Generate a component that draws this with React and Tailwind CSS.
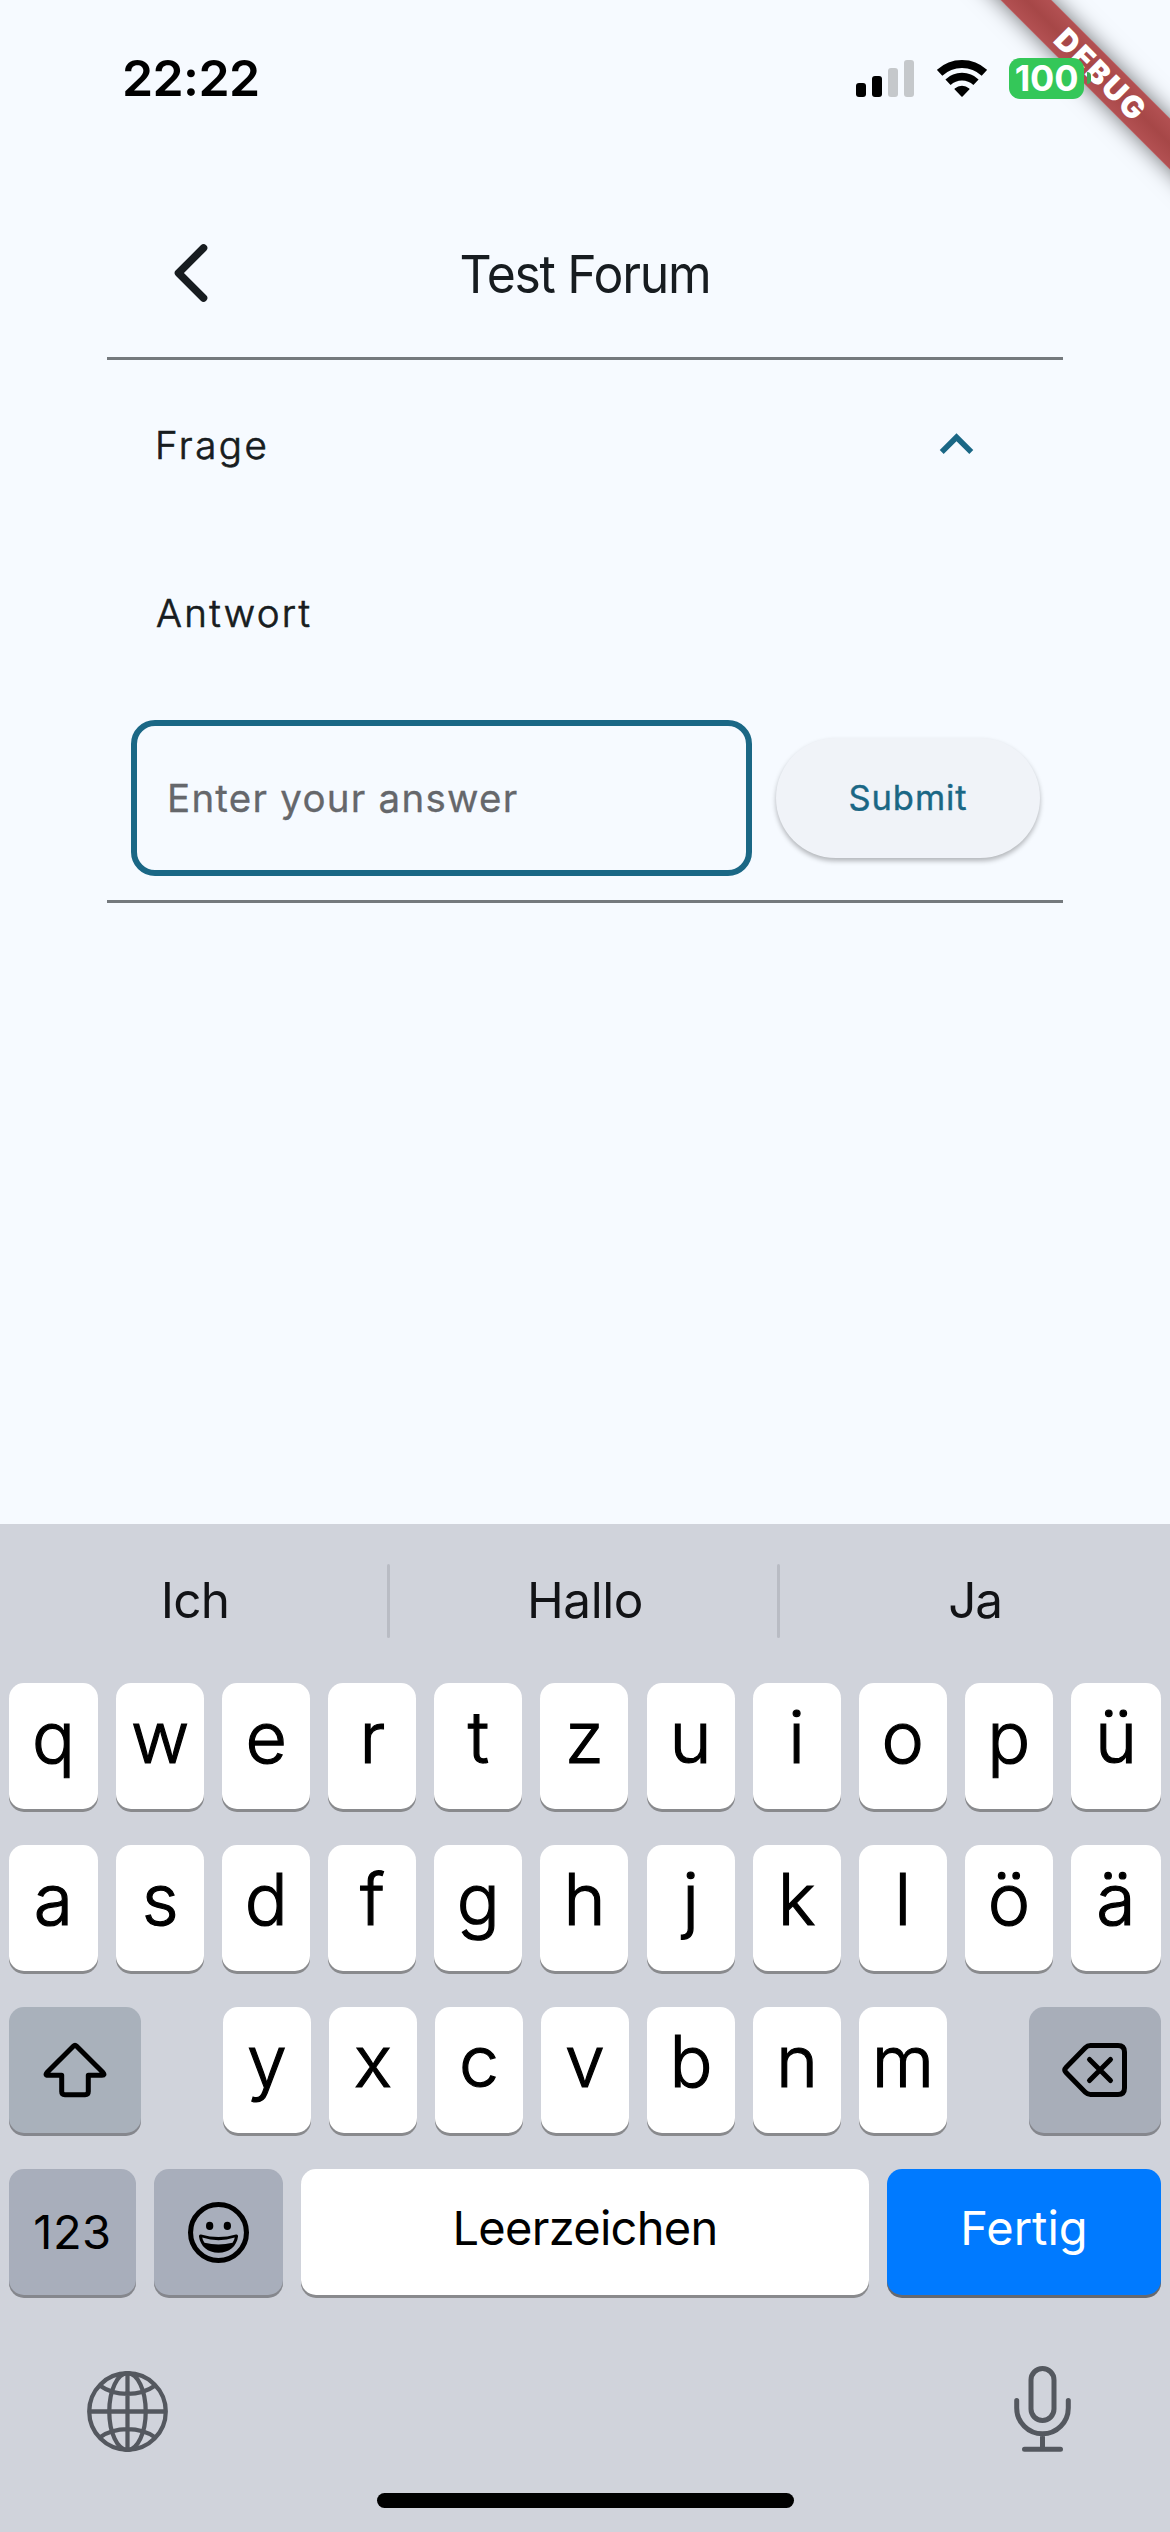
function SignalBars() {
  return (
    <div className="flex h-[37px] items-end gap-[6px]">
      <div className="h-[14px] w-[10px] rounded-[3px] bg-black" />
      <div className="h-[21px] w-[10px] rounded-[3px] bg-black" />
      <div className="h-[29px] w-[10px] rounded-[3px] bg-[#c5c8cb]" />
      <div className="h-[37px] w-[10px] rounded-[3px] bg-[#c5c8cb]" />
    </div>
  );
}

function WifiIcon() {
  return (
    <svg className="h-[37px] w-[50px]" viewBox="0 0 50 37" fill="none" stroke="#000">
      <path d="M2.6 12.9A32.9 32.9 0 0 1 47.4 12.9" strokeWidth="8" />
      <path d="M11 22.2A20.4 20.4 0 0 1 39 22.2" strokeWidth="7.6" />
      <path d="M25 36L18.3 29A10.4 10.4 0 0 1 31.7 29Z" fill="#000" strokeWidth="1.6" strokeLinejoin="round" />
    </svg>
  );
}

function DebugBanner() {
  return (
    <div className="absolute top-0 right-0 h-[240px] w-[240px] overflow-hidden">
      <div className="absolute top-[54px] left-[-32px] flex h-[36px] w-[400px] rotate-45 items-center justify-center bg-[linear-gradient(#b35153,#a64747_50%,#b35153)] pl-[8px] text-[30.5px] leading-[36px] font-black tracking-[2px] text-white shadow-[0_0_22px_rgba(0,0,0,0.55)]">
        DEBUG
      </div>
    </div>
  );
}

function StatusBar() {
  return (
    <div className="flex h-[156px] items-center justify-between pr-[79px] pl-[122px]">
      <span className="text-[50px] font-semibold tracking-[-0.6px] text-black">22:22</span>
      <div className="relative flex items-center">
        <SignalBars />
        <div className="w-[23px]" />
        <WifiIcon />
        <div className="w-[22px]" />
        <div className="flex h-[41px] w-[75px] items-center justify-center rounded-[11px] bg-[#34c759] text-[36px] font-bold tracking-[-0.2px] text-white">
          100
        </div>
        <div className="ml-[3px] h-[12px] w-[4px] rounded-r-[4px] bg-[#3fa656]" />
      </div>
    </div>
  );
}

function Forum() {
  return (
    <div className="mx-[107px] h-[1368px]">
      <div className="grid h-[204px] grid-cols-[120px_1fr_120px] items-center border-b-[3px] border-[#74797d] pt-[33px]">
        <svg className="ml-[64px] h-[60px] w-[40px]" viewBox="0 0 40 60" fill="none" stroke="#171c20" strokeWidth="7.600" strokeLinecap="round" strokeLinejoin="round">
          <path d="M32.500 5L7.500 30L32.500 55" />
        </svg>
        <h1 className="scale-x-95 pt-[2px] text-center text-[52.5px] leading-[60px] font-normal tracking-[-1.33px] text-[#171c20]">
          Test Forum
        </h1>
      </div>
      <div className="flex h-[171px] items-center justify-between pr-[73px] pl-[48px]">
        <span className="text-[38.5px] font-light tracking-[2.5px] text-[#171c20] [-webkit-text-stroke:0.7px_#171c20]">Frage</span>
        <svg className="mt-[-2px] h-[67px] w-[67px]" viewBox="0 0 24 24" fill="#1a6785">
          <path d="M12 8l-6 6 1.41 1.41L12 10.83l4.59 4.58L18 14z" />
        </svg>
      </div>
      <div className="flex h-[165px] items-center pl-[49px]">
        <span className="text-[38.5px] font-light tracking-[2.3px] text-[#171c20] [-webkit-text-stroke:0.7px_#171c20]">Antwort</span>
      </div>
      <div className="flex items-center gap-[24px] border-b-[3px] border-[#74797d] py-[24px] pl-[24px]">
        <div className="flex h-[156px] w-[621px] items-center rounded-[24px] border-[6px] border-[#1a6785] pt-[2px] pl-[30px]">
          <span className="text-[38.5px] tracking-[1.24px] text-[#65676b] [-webkit-text-stroke:0.3px_#65676b]">Enter your answer</span>
        </div>
        <button className="h-[120px] w-[264px] rounded-full bg-[#f0f3f8] text-[34.5px] font-normal tracking-[0.9px] text-[#1a6785] shadow-[0_3px_5px_rgba(0,0,0,0.28)] [-webkit-text-stroke:0.4px_#1a6785]">
          Submit
        </button>
      </div>
    </div>
  );
}

function Suggestions() {
  return (
    <div className="flex h-[153px] items-center text-[49.5px] font-normal text-[#121316]">
      <span className="w-[390px] text-center tracking-[-0.8px]">Ich</span>
      <div className="-ml-[3px] h-[74px] w-[3px] rounded-full bg-[#b9bcc4]" />
      <span className="w-[390px] text-center tracking-[-0.44px]">Hallo</span>
      <div className="-ml-[3px] h-[74px] w-[3px] rounded-full bg-[#b9bcc4]" />
      <span className="w-[390px] text-center tracking-[-1.2px]">Ja</span>
    </div>
  );
}

function LetterKey({ children }) {
  return (
    <div className="flex h-[126px] items-center justify-center rounded-[15px] bg-white pb-[16px] text-[71.5px] font-light text-black shadow-[0_3px_0_#898a8d] [-webkit-text-stroke:1.2px_#000]">
      {children}
    </div>
  );
}

function LetterRow({ letters }) {
  return (
    <div className="grid grid-cols-[89px_repeat(9,88px)_90px] justify-between">
      {letters.map((l) => (
        <LetterKey key={l}>{l}</LetterKey>
      ))}
    </div>
  );
}

function ShiftIcon() {
  return (
    <svg className="h-[56px] w-[64px]" viewBox="0 0 64 56" fill="none" stroke="#000" strokeWidth="5" strokeLinejoin="round">
      <path d="M30.300 4.200Q32 2.500 33.700 4.200L60 30.500Q62.300 33.300 59 33.300H45.300V49.500Q45.300 52.700 42.100 52.700H21.900Q18.700 52.700 18.700 49.500V33.300H5Q1.700 33.300 4 30.500Z" />
    </svg>
  );
}

function DeleteIcon() {
  return (
    <svg className="h-[54px] w-[66px]" viewBox="0 0 66 54" fill="none" stroke="#000" strokeWidth="5" strokeLinecap="round" strokeLinejoin="round">
      <path d="M28.500 2.500H56Q62.500 2.500 62.500 9V45Q62.500 51.500 56 51.500H28.500Q25.500 51.500 23.300 49.300L4 29.500Q1.600 27 4 24.500L23.300 4.700Q25.500 2.500 28.500 2.500Z" />
      <path d="M27.500 16.500L48.500 37.500M48.500 16.500L27.500 37.500" />
    </svg>
  );
}

function SmileyIcon() {
  return (
    <svg className="h-[61px] w-[61px]" viewBox="0 0 60 60">
      <circle cx="30" cy="30" r="27.500" fill="none" stroke="#000" strokeWidth="5" />
      <ellipse cx="21.300" cy="23.500" rx="3.600" ry="4" />
      <ellipse cx="38.700" cy="23.500" rx="3.600" ry="4" />
      <path d="M12.800 32Q30 37 47.200 32Q49.400 31.600 49.200 34C48 43.500 40.500 50 30 50S12 43.500 10.800 34Q10.600 31.600 12.800 32Z" />
      <path d="M14 35Q30 40 46 35Q45.500 38 43.800 40.200Q30 43.600 16.200 40.200Q14.500 38 14 35Z" fill="#a8aebb" />
    </svg>
  );
}

function GlobeIcon() {
  return (
    <svg className="h-[81px] w-[81px]" viewBox="0 0 80 80" fill="none" stroke="#54585f" strokeWidth="4.200">
      <circle cx="40" cy="40" r="37.800" />
      <ellipse cx="40" cy="40" rx="18" ry="38" />
      <path d="M40 2V78M2 40H78M13 14.500Q24 22.500 40 22.500T67 14.500M13 65.500Q24 57.500 40 57.500T67 65.500" />
    </svg>
  );
}

function MicIcon() {
  return (
    <svg className="h-[86px] w-[57px]" viewBox="0 0 57 86" fill="none" stroke="#54585f" strokeWidth="5" strokeLinecap="round">
      <rect x="17" y="2.500" width="23" height="52" rx="11.500" />
      <path d="M2.700 34.500V42A25.800 25.800 0 0 0 54.300 42V34.500M28.500 68.500V83M10.500 83.200H46.500" />
    </svg>
  );
}

function Keyboard() {
  return (
    <div className="h-[1008px] bg-[#d0d3db]">
      <Suggestions />
      <div className="flex flex-col gap-[36px] px-[9px] pt-[6px]">
        <LetterRow letters={["q", "w", "e", "r", "t", "z", "u", "i", "o", "p", "ü"]} />
        <LetterRow letters={["a", "s", "d", "f", "g", "h", "j", "k", "l", "ö", "ä"]} />
        <div className="flex justify-between">
          <div className="flex h-[126px] w-[132px] items-center justify-center rounded-[15px] bg-[#a9b1bb] shadow-[0_3px_0_#85878d]">
            <ShiftIcon />
          </div>
          <div className="grid grid-cols-[repeat(7,88px)] gap-[18px]">
            {["y", "x", "c", "v", "b", "n", "m"].map((l) => (
              <LetterKey key={l}>{l}</LetterKey>
            ))}
          </div>
          <div className="flex h-[126px] w-[132px] items-center justify-center rounded-[15px] bg-[#a8aeb9] shadow-[0_3px_0_#85878d]">
            <DeleteIcon />
          </div>
        </div>
        <div className="flex h-[126px] gap-[18px] text-[47px] font-normal">
          <div className="flex w-[127px] items-center justify-center rounded-[15px] bg-[#a8aebb] tracking-[0.5px] shadow-[0_3px_0_#85878d]">
            123
          </div>
          <div className="flex w-[129px] items-center justify-center rounded-[15px] bg-[#a8aebb] shadow-[0_3px_0_#85878d]">
            <SmileyIcon />
          </div>
          <div className="flex w-[568px] items-center justify-center rounded-[15px] bg-white pb-[8px] tracking-[-0.7px] shadow-[0_3px_0_#898a8d]">
            Leerzeichen
          </div>
          <div className="flex w-[274px] items-center justify-center rounded-[15px] bg-[#007aff] pb-[8px] text-white shadow-[0_3px_0_#66696f]">
            Fertig
          </div>
        </div>
      </div>
      <div className="flex items-start justify-between pt-[71px] pr-[99px] pl-[87px]">
        <div className="pt-[5px]">
          <GlobeIcon />
        </div>
        <MicIcon />
      </div>
      <div className="mx-auto mt-[41px] h-[15px] w-[417px] rounded-full bg-black" />
    </div>
  );
}

export default function App() {
  return (
    <div className="relative h-[2532px] w-[1170px] overflow-hidden bg-[#f6faff] font-['Inter',sans-serif]">
      <DebugBanner />
      <StatusBar />
      <Forum />
      <Keyboard />
    </div>
  );
}
